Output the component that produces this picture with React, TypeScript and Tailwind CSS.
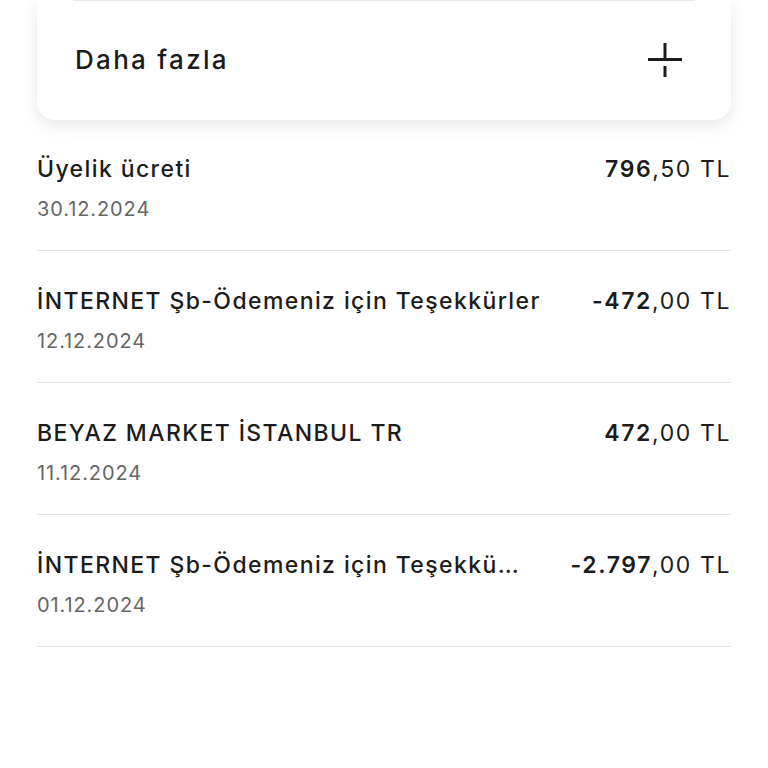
import React from "react";

type Tx = { title: string; date: string; whole: string; cents: string };

const items: Tx[] = [
  { title: "Üyelik ücreti", date: "30.12.2024", whole: "796", cents: ",50 TL" },
  { title: "İNTERNET Şb-Ödemeniz için Teşekkürler", date: "12.12.2024", whole: "-472", cents: ",00 TL" },
  { title: "BEYAZ MARKET İSTANBUL TR", date: "11.12.2024", whole: "472", cents: ",00 TL" },
  { title: "İNTERNET Şb-Ödemeniz için Teşekkürler", date: "01.12.2024", whole: "-2.797", cents: ",00 TL" },
];

function PlusIcon() {
  return (
    <svg width="36" height="36" viewBox="0 0 36 36" fill="none" className="text-[#1c1c1c]">
      <path d="M18 1v15.5" stroke="currentColor" strokeWidth="3" />
      <path d="M1 17.5h34" stroke="currentColor" strokeWidth="3" />
      <path d="M18 24v11" stroke="currentColor" strokeWidth="3" />
    </svg>
  );
}

export default function App() {
  return (
    <div className="min-h-screen bg-white text-[#1c1c1c]" style={{ fontFamily: "Inter, 'Noto Sans', sans-serif" }}>
      {/* Collapsed card */}
      <div className="mx-[37px] rounded-b-[18px] bg-white px-[36px] shadow-[0_6px_16px_rgba(0,0,0,0.09)]">
        <div className="h-px bg-[#e6e6e6]" />
        <div className="flex h-[119px] items-center justify-between pb-[2px] pl-[2px] pr-[12px]">
          <span className="text-[26px] font-medium tracking-[2.3px]">Daha fazla</span>
          <PlusIcon />
        </div>
      </div>

      {/* Transactions */}
      <div className="mx-[37px] -mt-[1px]">
        {items.map((t) => (
          <div key={t.date} className="border-b border-[#e6e6e6] pt-[36px] pb-[27px]">
            <div className="flex h-[28px] items-center justify-between gap-[44px]">
              <span className="min-w-0 truncate text-[23px] font-medium tracking-[1.4px]">{t.title}</span>
              <span className="shrink-0 text-[23px] tracking-[1.6px]">
                <span className="font-semibold">{t.whole}</span>
                <span className="font-normal">{t.cents}</span>
              </span>
            </div>
            <div className="mt-[12px] flex h-[28px] items-center text-[20px] tracking-[0.9px] text-[#666666]">
              {t.date}
            </div>
          </div>
        ))}
      </div>
    </div>
  );
}
